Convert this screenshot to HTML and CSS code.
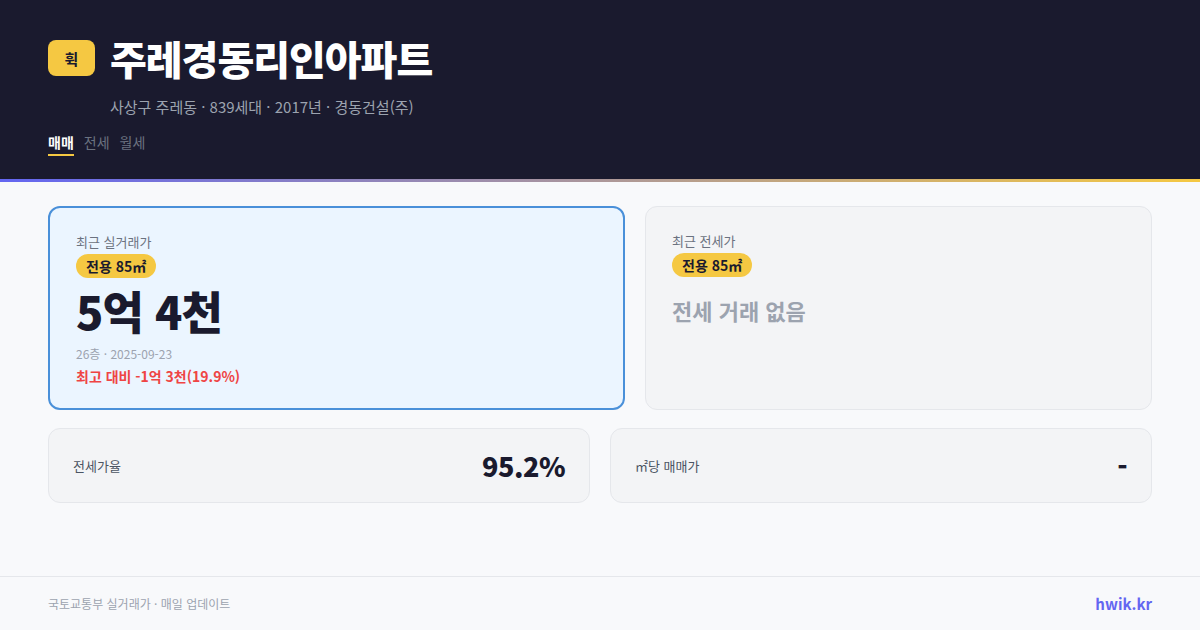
FILE: index.html
```html
<!DOCTYPE html>
<html lang="ko">
<head>
<meta charset="utf-8">
<link rel="stylesheet" href="styles.css">
</head>
<body>
<div class="page">
  <header class="header">
    <div class="title-row">
      <div class="logo">휙</div>
      <h1 class="title">주레경동리인아파트</h1>
    </div>
    <div class="subtitle">사상구 주레동 · 839세대 · 2017년 · 경동건설(주)</div>
    <nav class="tabs">
      <span class="tab active">매매</span>
      <span class="tab">전세</span>
      <span class="tab">월세</span>
    </nav>
  </header>
  <div class="accent"></div>
  <main class="main">
    <div class="top-row">
      <section class="card card-primary">
        <div class="card-label">최근 실거래가</div>
        <span class="badge">전용 85㎡</span>
        <div class="price">5억 4천</div>
        <div class="meta">26층 · 2025-09-23</div>
        <div class="diff">최고 대비 -1억 3천(19.9%)</div>
      </section>
      <section class="card card-muted">
        <div class="card-label">최근 전세가</div>
        <span class="badge">전용 85㎡</span>
        <div class="empty">전세 거래 없음</div>
      </section>
    </div>
    <div class="stat-row">
      <div class="stat">
        <span class="stat-label">전세가율</span>
        <span class="stat-value">95.2%</span>
      </div>
      <div class="stat">
        <span class="stat-label">㎡당 매매가</span>
        <span class="stat-value">-</span>
      </div>
    </div>
  </main>
  <footer class="footer">
    <span class="source">국토교통부 실거래가 · 매일 업데이트</span>
    <span class="brand">hwik.kr</span>
  </footer>
</div>
</body>
</html>
```

FILE: styles.css
```css
* { box-sizing: border-box; margin: 0; padding: 0; }
html, body { width: 1200px; height: 630px; overflow: hidden; }
body {
  font-family: "Noto Sans CJK KR", "Noto Sans", sans-serif;
  background: #f8f9fb;
  color: #1a1a2e;
}
.page { display: flex; flex-direction: column; height: 630px; }
.header {
  background: #1a1a2e;
  height: 179px;
  padding: 36px 48px 0;
}
.title-row { display: flex; align-items: center; gap: 15px; }
.logo {
  width: 47px; height: 36px;
  background: #f5c842;
  border-radius: 8px;
  display: flex; align-items: center; justify-content: center;
  font-size: 15px; font-weight: 700; color: #1a1a2e;
}
.title {
  font-size: 40px; font-weight: 900; color: #ffffff;
  line-height: 44px; letter-spacing: -1px;
}
.subtitle {
  margin: 16px 0 0 62px;
  font-size: 15px; color: #9ca3af; line-height: 22px;
}
.tabs { display: flex; gap: 10px; margin-top: 14px; }
.tab {
  font-size: 14px; color: #6b7280; line-height: 20px;
  padding-bottom: 2px;
  border-bottom: 2px solid transparent;
}
.tab.active { color: #ffffff; font-weight: 700; border-bottom-color: #f5c842; }
.accent {
  height: 3px;
  background: linear-gradient(90deg, #6366f1, #f5c842);
}
.main { padding: 24px 48px 0; flex: 1; }
.top-row {
  display: grid;
  grid-template-columns: 577fr 507fr;
  gap: 20px;
}
.card {
  height: 204px;
  border-radius: 12px;
  padding: 24px 26px;
  display: flex; flex-direction: column; align-items: flex-start;
}
.card-primary { background: #ebf5ff; border: 2px solid #4a90d9; }
.card-muted { background: #f3f4f6; border: 1px solid #e5e7eb; }
.card-label { font-size: 13px; color: #6b7280; line-height: 20px; }
.badge {
  margin-top: 2px;
  background: #f5c842;
  border-radius: 12px;
  padding: 0 10px;
  font-size: 14px; font-weight: 700; color: #1a1a2e; line-height: 24px;
}
.price {
  font-size: 45px; font-weight: 900; letter-spacing: -0.8px;
  line-height: 62px; margin-top: 2px; color: #1a1a2e;
}
.meta { font-size: 12px; color: #9ca3af; line-height: 18px; margin-top: 3px; }
.diff { font-size: 14px; font-weight: 700; color: #ef4444; line-height: 20px; margin-top: 3px; }
.empty {
  font-size: 22px; font-weight: 700; color: #9ca3af;
  line-height: 30px; margin-top: 18px;
}
.stat-row {
  display: grid; grid-template-columns: 1fr 1fr; gap: 20px;
  margin-top: 18px;
}
.stat {
  height: 75px;
  background: #f3f4f6; border: 1px solid #e5e7eb; border-radius: 12px;
  padding: 0 24px;
  display: flex; align-items: center; justify-content: space-between;
}
.stat-label { font-size: 13px; color: #4b5563; }
.stat-value { font-size: 27px; font-weight: 900; color: #1a1a2e; letter-spacing: -0.5px; }
.footer {
  height: 54px;
  border-top: 1px solid #e5e7eb;
  padding: 0 48px;
  display: flex; align-items: center; justify-content: space-between;
}
.source { font-size: 12px; color: #9ca3af; }
.brand { font-size: 15px; font-weight: 700; color: #6366f1; }
```
